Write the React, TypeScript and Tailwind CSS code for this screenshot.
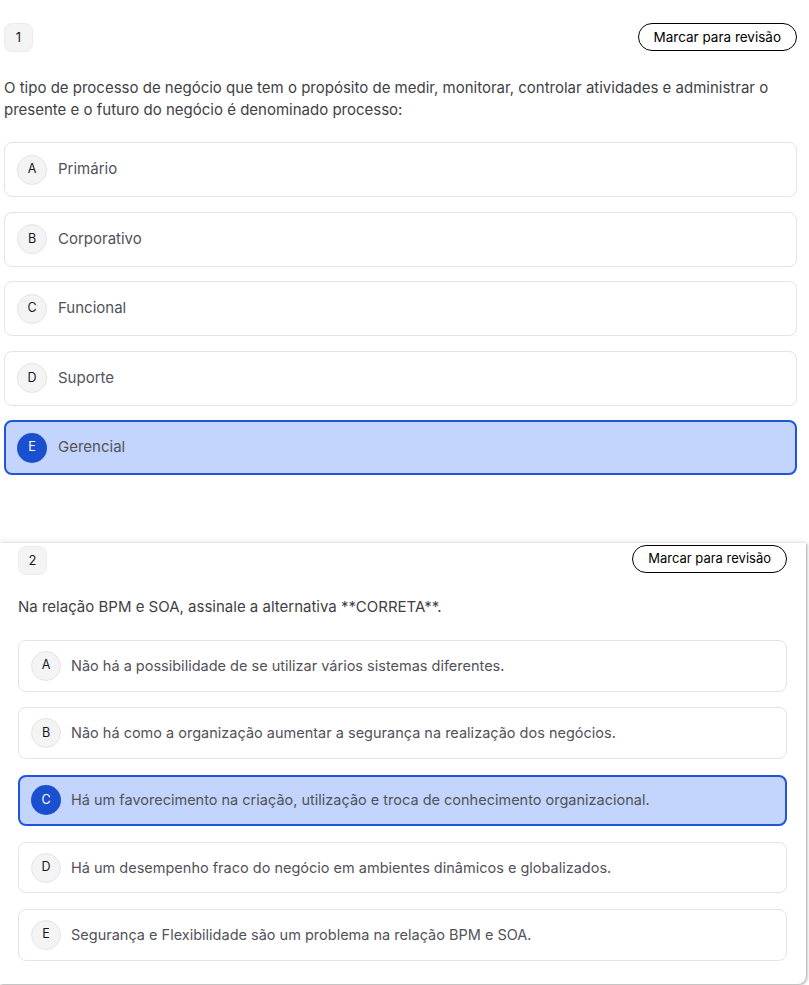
import React from "react";

type Opt = { l: string; t: string };

const q1: Opt[] = [
  { l: "A", t: "Primário" },
  { l: "B", t: "Corporativo" },
  { l: "C", t: "Funcional" },
  { l: "D", t: "Suporte" },
  { l: "E", t: "Gerencial" },
];

const q2: Opt[] = [
  { l: "A", t: "Não há a possibilidade de se utilizar vários sistemas diferentes." },
  { l: "B", t: "Não há como a organização aumentar a segurança na realização dos negócios." },
  { l: "C", t: "Há um favorecimento na criação, utilização e troca de conhecimento organizacional." },
  { l: "D", t: "Há um desempenho fraco do negócio em ambientes dinâmicos e globalizados." },
  { l: "E", t: "Segurança e Flexibilidade são um problema na relação BPM e SOA." },
];

function Option({ o, sel, big }: { o: Opt; sel: boolean; big: boolean }) {
  return (
    <div
      className={
        (big ? "h-[55px] px-[11px] " : "h-[51.5px] px-[11px] ") +
        "flex items-center rounded-lg " +
        (sel
          ? "bg-[#c3d4fd] border-2 border-[#1f55d6]"
          : "bg-white border border-[#e4e4e7]")
      }
    >
      <div
        className={
          "flex h-[30px] w-[30px] shrink-0 items-center justify-center rounded-full text-[12.5px] " +
          (sel
            ? "bg-[#1a4fd0] text-white"
            : "ml-[1px] bg-[#f4f4f5] border border-[#e4e4e7] text-[#18181b]")
        }
      >
        {o.l}
      </div>
      <span
        className={
          (big ? "ml-[11px] text-[15px] " : "ml-[10px] text-[14.5px] ") +
          "text-[#52525b]"
        }
      >
        {o.t}
      </span>
    </div>
  );
}

export default function App() {
  return (
    <div
      className="relative h-[985px] w-[809px] overflow-hidden bg-white"
      style={{ fontFamily: "Inter, 'Noto Sans', sans-serif" }}
    >
      {/* Question 1 */}
      <div className="pl-[4px] pr-[12px] pt-[23px]">
        <div className="flex items-start justify-between">
          <div className="flex h-[29px] w-[29px] items-center justify-center rounded-lg border border-[#ececee] bg-[#f4f4f5] text-[13px] text-[#18181b]">
            1
          </div>
          <button className="flex h-[28px] items-center rounded-full border-[1.5px] border-black px-[15px] text-[13.5px] text-black">
            Marcar para revisão
          </button>
        </div>
        <p className="mt-[25px] text-[15px] leading-[22px] text-[#3f3f46]">
          O tipo de processo de negócio que tem o propósito de medir, monitorar, controlar atividades e administrar o presente e o futuro do negócio é denominado processo:
        </p>
        <div className="mt-[21px] flex flex-col gap-[14.5px]">
          {q1.map((o) => (
            <Option key={o.l} o={o} sel={o.l === "E"} big />
          ))}
        </div>
      </div>

      {/* Question 2 card */}
      <div className="absolute left-0 top-[543px] h-[441px] w-[806px] rounded-br-lg bg-white shadow-[0_-3px_5px_rgba(0,0,0,0.06),1px_1px_3px_rgba(0,0,0,0.35)]">
        <div className="pl-[18px] pr-[19px] pt-[2px]">
          <div className="flex items-start justify-between">
            <div className="mt-[1px] flex h-[29px] w-[29px] items-center justify-center rounded-lg border border-[#ececee] bg-[#f4f4f5] text-[13px] text-[#18181b]">
              2
            </div>
            <button className="flex h-[28px] items-center rounded-full border-[1.5px] border-black px-[15px] text-[13px] text-black">
              Marcar para revisão
            </button>
          </div>
          <p className="mt-[21px] text-[15px] leading-[22px] text-[#3f3f46]">
            Na relação BPM e SOA, assinale a alternativa **CORRETA**.
          </p>
          <div className="mt-[22px] flex flex-col gap-[15.75px]">
            {q2.map((o) => (
              <Option key={o.l} o={o} sel={o.l === "C"} big={false} />
            ))}
          </div>
        </div>
      </div>
    </div>
  );
}
